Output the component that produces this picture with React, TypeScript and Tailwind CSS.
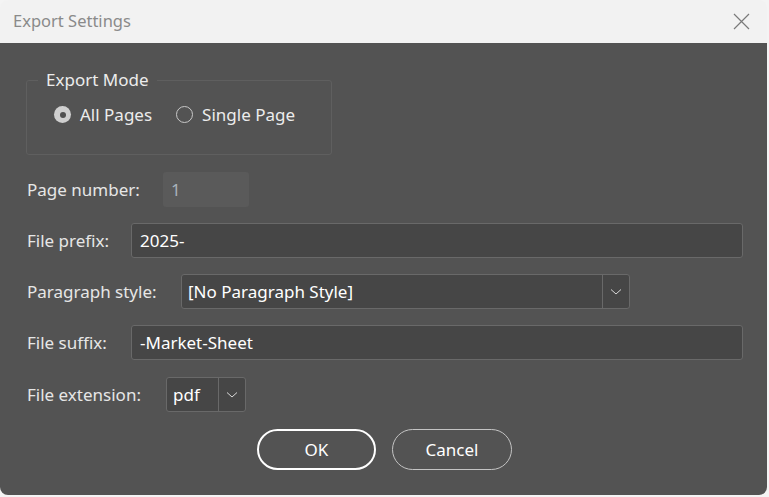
import React from 'react'

const font = { fontFamily: '"Noto Sans", "Liberation Sans", sans-serif' }

function Chevron() {
  return (
    <svg width="12" height="8" viewBox="0 0 12 8" fill="none">
      <path d="M1 1.5 L6 6 L11 1.5" stroke="#d8d8d8" strokeWidth="1" />
    </svg>
  )
}

function Radio({ checked, label }: { checked?: boolean; label: string }) {
  return (
    <label className="flex items-center gap-[9px]">
      {checked ? (
        <span className="w-[17px] h-[17px] rounded-full bg-[#cfcfcf] flex items-center justify-center">
          <span className="w-[6px] h-[6px] rounded-full bg-[#505050]" />
        </span>
      ) : (
        <span className="w-[17px] h-[17px] rounded-full border border-[#c8c8c8]" />
      )}
      <span className="text-[#ececec]">{label}</span>
    </label>
  )
}

function TextField({ value }: { value: string }) {
  return (
    <div className="flex-1 h-[35px] rounded-[3px] border border-[#696969] bg-[#464646] flex items-center px-[8px] text-white">
      {value}
    </div>
  )
}

export default function App() {
  return (
    <div className="w-[769px] h-[497px] bg-[#f4f4f4] text-[17px]" style={font}>
      <div className="w-[767px] h-[495px] rounded-[8px] overflow-hidden flex flex-col">
        <div className="h-[43px] bg-[#f2f2f2] flex items-center justify-between pl-[13px] pr-[17px]">
          <span className="text-[#8a8a8a] text-[16.5px]">Export Settings</span>
          <svg width="17" height="17" viewBox="0 0 17 17">
            <path d="M1 1 L16 16 M16 1 L1 16" stroke="#7a7a7a" strokeWidth="1.2" />
          </svg>
        </div>
        <div className="flex-1 bg-[#535353] pl-[26px] pr-[24px] pt-[26px] flex flex-col">
          <fieldset className="w-[306px] h-[86px] border border-[#5f5f5f] rounded-[3px] p-0 m-0">
            <legend className="ml-[11px] px-[8px] text-[#ececec] leading-[22px]">Export Mode</legend>
            <div className="flex items-center gap-[24px] pl-[27px] pt-[11px]">
              <Radio checked label="All Pages" />
              <Radio label="Single Page" />
            </div>
          </fieldset>

          <div className="flex items-center mt-[17px] h-[35px]">
            <span className="text-[#e6e6e6] pl-[1px] w-[137px]">Page number:</span>
            <div className="w-[86px] h-[35px] rounded-[3px] bg-[#5a5a5a] flex items-center px-[8px] text-[#a9b2ba]">
              1
            </div>
          </div>

          <div className="flex items-center mt-[16px] gap-[13px]">
            <span className="text-[#e6e6e6] pl-[1px] w-[92px]">File prefix:</span>
            <TextField value="2025-" />
          </div>

          <div className="flex items-center mt-[16px] gap-[13px]">
            <span className="text-[#e6e6e6] pl-[1px] w-[142px]">Paragraph style:</span>
            <div className="w-[449px] h-[35px] rounded-[3px] border border-[#696969] bg-[#464646] flex">
              <div className="flex-1 flex items-center px-[6px] text-white">[No Paragraph Style]</div>
              <div className="w-[27px] border-l border-[#696969] flex items-center justify-center">
                <Chevron />
              </div>
            </div>
          </div>

          <div className="flex items-center mt-[16px] gap-[13px]">
            <span className="text-[#e6e6e6] pl-[1px] w-[92px]">File suffix:</span>
            <TextField value="-Market-Sheet" />
          </div>

          <div className="flex items-center mt-[17px] gap-[13px]">
            <span className="text-[#e6e6e6] pl-[1px] w-[127px]">File extension:</span>
            <div className="w-[80px] h-[35px] rounded-[3px] border border-[#696969] bg-[#464646] flex">
              <div className="flex-1 flex items-center px-[6px] text-white">pdf</div>
              <div className="w-[27px] border-l border-[#696969] flex items-center justify-center">
                <Chevron />
              </div>
            </div>
          </div>

          <div className="flex justify-center gap-[16px] mt-[17px]">
            <button className="w-[119px] h-[41px] rounded-full border-2 border-white text-white">OK</button>
            <button className="w-[120px] h-[41px] rounded-full border border-[#c4c4c4] text-white">Cancel</button>
          </div>
        </div>
      </div>
    </div>
  )
}
